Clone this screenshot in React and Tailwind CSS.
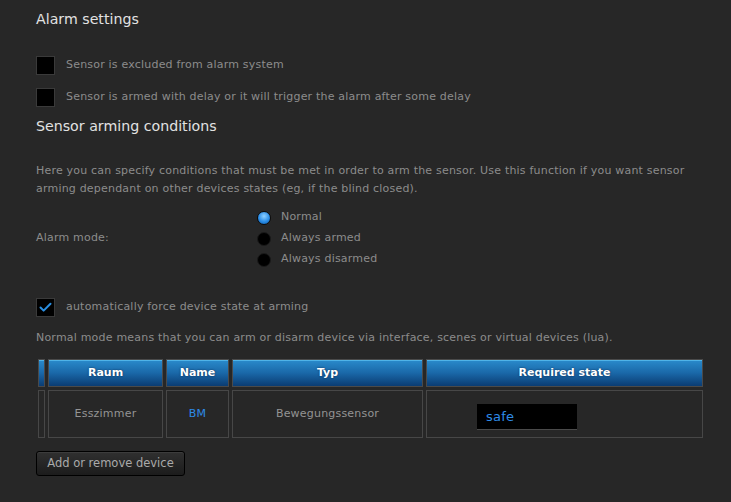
import { Check } from 'lucide-react';

const font = { fontFamily: '"DejaVu Sans", Verdana, sans-serif' };

const Box = ({ checked, label }) => (
  <div className="flex items-center h-[19px] gap-[11px]">
    <div className="w-[19px] h-[19px] bg-black border border-[#3a3a3a] flex items-center justify-center">
      {checked && <Check size={15} strokeWidth={3.2} className="text-[#2a8ee0]" />}
    </div>
    <span className="text-[11px] tracking-[0.2px] text-[#8c8c8c]">{label}</span>
  </div>
);

const Radio = ({ checked, label }) => (
  <div className="flex items-center h-[21px] gap-[10px]">
    <div
      className={
        checked
          ? 'w-[14px] h-[14px] rounded-full border border-[#0b0b0b] bg-[radial-gradient(circle_at_50%_35%,#8fd0ff,#2b8ee8_55%,#0d5aa8)]'
          : 'w-[14px] h-[14px] rounded-full border border-[#1a1a1a] bg-black'
      }
    ></div>
    <span className="text-[11px] tracking-[0.2px] text-[#8c8c8c]">{label}</span>
  </div>
);

const th = 'h-[28px] border border-[#4a4a4a] bg-gradient-to-b from-[#2a8bcc] via-[#1a68a8] to-[#0b3c72] text-white text-[11px] font-bold text-center p-0 shadow-[inset_0_1px_0_#4fb3e8] [text-shadow:0_0_2px_#0a2a50]';
const td = 'h-[48px] border border-[#474747] text-[11px] tracking-[0.2px] text-center p-0';

export default function App() {
  return (
    <div className="min-h-[502px] w-[731px] bg-[#272727] px-[36px] pt-[10px] pb-[20px]" style={font}>
      <h2 className="text-[14.2px] text-[#e2e2e2] h-[19px] leading-[19px]">Alarm settings</h2>

      <div className="mt-[27px] flex flex-col gap-[13px]">
        <Box label="Sensor is excluded from alarm system" />
        <Box label="Sensor is armed with delay or it will trigger the alarm after some delay" />
      </div>

      <h2 className="mt-[10px] text-[14.2px] text-[#e2e2e2] h-[19px] leading-[19px]">Sensor arming conditions</h2>

      <p className="mt-[26px] w-[665px] text-[11px] tracking-[0.2px] leading-[18px] text-[#8c8c8c]">
        Here you can specify conditions that must be met in order to arm the sensor. Use this function if you want sensor
        arming dependant on other devices states (eg, if the blind closed).
      </p>

      <div className="mt-[9px] flex items-center">
        <span className="w-[221px] text-[11px] tracking-[0.2px] text-[#8c8c8c]">Alarm mode:</span>
        <div className="flex flex-col">
          <Radio checked label="Normal" />
          <Radio label="Always armed" />
          <Radio label="Always disarmed" />
        </div>
      </div>

      <div className="mt-[28px]">
        <Box checked label="automatically force device state at arming" />
      </div>

      <p className="mt-[12px] text-[11px] tracking-[0.2px] leading-[18px] text-[#8c8c8c]">
        Normal mode means that you can arm or disarm device via interface, scenes or virtual devices (lua).
      </p>

      <table className="mt-[9px] -ml-[1px] border-separate border-spacing-[3px] w-[671px] table-fixed">
        <colgroup>
          <col className="w-[7px]" />
          <col className="w-[115px]" />
          <col className="w-[63px]" />
          <col className="w-[191px]" />
          <col />
        </colgroup>
        <thead>
          <tr>
            <th className={th}></th>
            <th className={th}>Raum</th>
            <th className={th}>Name</th>
            <th className={th}>Typ</th>
            <th className={th}>Required state</th>
          </tr>
        </thead>
        <tbody>
          <tr>
            <td className={td}></td>
            <td className={td + ' text-[#949494]'}>Esszimmer</td>
            <td className={td + ' text-[#2e8be6]'}>BM</td>
            <td className={td + ' text-[#949494]'}>Bewegungssensor</td>
            <td className={td}>
              <div className="flex justify-center pr-[75px] pt-[6px]">
                <div className="w-[100px] h-[26px] bg-black border-b border-[#4a4a4a] text-[13px] text-[#2e8be6] pl-[9px] leading-[25px] text-left">
                  safe
                </div>
              </div>
            </td>
          </tr>
        </tbody>
      </table>

      <button className="mt-[10px] h-[25px] w-[149px] rounded-[3px] border border-black bg-gradient-to-b from-[#303030] to-[#1c1c1c] text-[11.5px] text-[#aaaaaa] shadow-[inset_0_1px_0_#3c3c3c]">
        Add or remove device
      </button>
    </div>
  );
}
